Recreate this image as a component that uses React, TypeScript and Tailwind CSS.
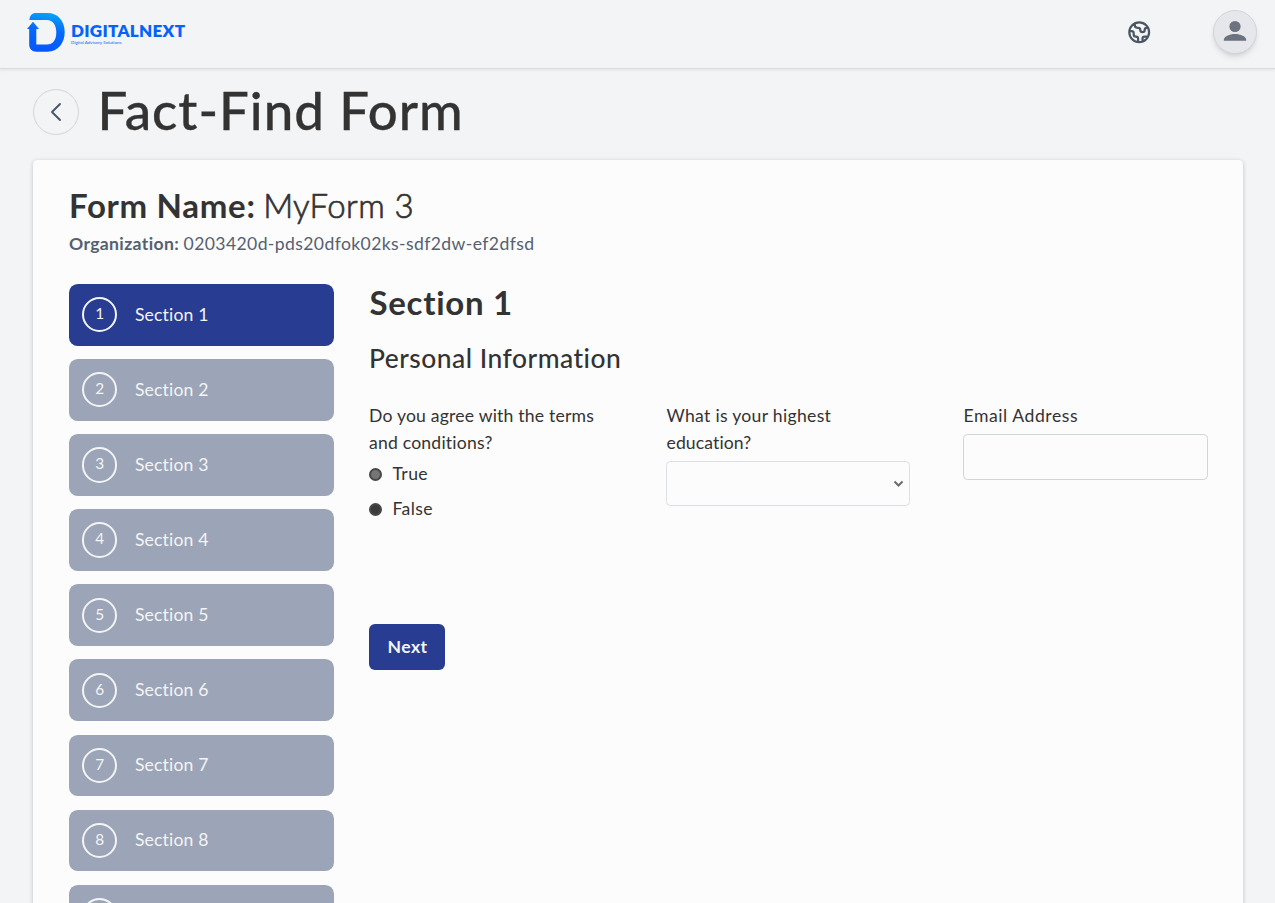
import { HiOutlineGlobe } from 'react-icons/hi';

const sections = [1, 2, 3, 4, 5, 6, 7, 8, 9];

function Logo() {
  return (
    <div className="flex items-center">
      <svg width="38" height="40" viewBox="0 0 38 40" className="mr-[6px] shrink-0">
        <defs>
          <linearGradient id="mark" x1="0.6" y1="0" x2="0.45" y2="1">
            <stop offset="0" stopColor="#08a4f6" />
            <stop offset="0.45" stopColor="#0568fb" />
            <stop offset="1" stopColor="#0558fc" />
          </linearGradient>
        </defs>
        <path
          fill="url(#mark)"
          d="M2.4 8C2.8 3.5 5 1 9 1h11.500C31 1 37.700 9 37.700 20S31 39.700 20.500 39.700H9.500C5 39.700 2.200 37 2.200 32.500V17H0L6 9.700 12 17H9.300V32.500H20c6 0 9.300-4.500 9.300-12S26 8 20 8Z"
        />
      </svg>
      <div className="flex flex-col pt-[3px] text-[#0563fb]">
        <span className="text-[17px] leading-[17px] font-extrabold tracking-[0.3px]">DIGITALNEXT</span>
        <span className="mt-[1px] text-[4.5px] leading-[6px]">Digital Advisory Solutions</span>
      </div>
    </div>
  );
}

function Header() {
  return (
    <header className="flex h-[69px] shrink-0 items-center justify-between border-b border-[#d9dbdf] pr-[18px] pl-[27px] shadow-[0_1px_3px_rgba(0,0,0,0.08)]">
      <div className="-mt-[4px]">
        <Logo />
      </div>
      <div className="-mt-[4px] flex items-center gap-[61px]">
        <HiOutlineGlobe className="size-[26.4px] text-[#4b5563]" />
        <button className="flex size-[44px] items-center justify-center rounded-full border border-[#d1d5db] bg-[#e5e7eb] shadow-[0_4px_6px_-1px_rgba(0,0,0,0.1),0_2px_4px_-2px_rgba(0,0,0,0.1)]">
          <svg width="24" height="22" viewBox="0 0 24 22" fill="#6b7280" className="-mt-[2px]">
            <circle cx="12" cy="6.500" r="5.600" />
            <path d="M.8 20.800v-.9C.8 16.600 6.500 14 12 14s11.200 2.600 11.200 5.900v.9Z" />
          </svg>
        </button>
      </div>
    </header>
  );
}

function SectionTab({ n, active }: { n: number; active: boolean }) {
  return (
    <button
      className={`flex h-[61.6px] w-full shrink-0 items-center rounded-[8.8px] pl-[13.2px] text-[#f3f4f6] ${active ? 'bg-[#283c91]' : 'bg-[#9ca4b7]'}`}
    >
      <span className="mr-[17.6px] flex size-[35.2px] items-center justify-center rounded-full border-2 border-[#f3f4f6] pb-[2px] text-[15.4px]">
        {n}
      </span>
      <span className="text-[17.6px] tracking-[0.15px]">Section {n}</span>
    </button>
  );
}

function Radio({ label, focused }: { label: string; focused?: boolean }) {
  return (
    <label className="flex h-[35.2px] items-center gap-[10.5px]">
      <span
        className={`size-[13px] rounded-full border-2 border-[#474747] ${focused ? 'bg-[#757575]' : 'bg-[#3b3b3b]'}`}
      />
      <span className="pt-[1px] tracking-[0.4px]">{label}</span>
    </label>
  );
}

export default function App() {
  return (
    <div className="flex h-screen flex-col overflow-hidden bg-[#f3f4f6] font-['Lato',sans-serif] text-[#333333] [font-variant-ligatures:none]">
      <Header />
      <div className="flex shrink-0 items-center gap-[18.500px] pt-[7px] pl-[33px]">
        <button className="mt-[5px] flex size-[46px] items-center justify-center rounded-full border border-[#d1d5db]">
          <svg width="12" height="20" viewBox="0 0 12 20" fill="none" stroke="#475569" strokeWidth="1.9" strokeLinecap="round" strokeLinejoin="round">
            <path d="M10 2 2 10l8 8" />
          </svg>
        </button>
        <h1 className="pt-[1px] text-[52.8px] leading-[65px] font-medium tracking-[1px] [-webkit-text-stroke:0.3px_#333]">Fact-Find Form</h1>
      </div>
      <main className="mr-[32px] ml-[33px] mt-[18px] h-[900px] shrink-0 rounded-t-[4.4px] bg-[#fcfcfc] px-[36px] pt-[25px] shadow-[0_1px_4px_rgba(0,0,0,0.22)]">
        <h2 className="text-[33px] leading-[40px]">
          <span className="font-bold tracking-[0.7px]">Form Name:</span>
          <span className="ml-[7.5px] font-light tracking-[0.4px] [-webkit-text-stroke:0.7px_#333]">MyForm 3</span>
        </h2>
        <p className="mt-[6px] text-[17.6px] leading-[26.4px] text-[#556070]">
          <span className="font-bold tracking-[0.34px]">Organization:</span>{' '}
          <span className="tracking-[0.38px]">0203420d-pds20dfok02ks-sdf2dw-ef2dfsd</span>
        </p>
        <div className="mt-[26.5px] flex gap-[35px]">
          <nav className="flex w-[265px] shrink-0 flex-col gap-[13.52px]">
            {sections.map((n) => (
              <SectionTab key={n} n={n} active={n === 1} />
            ))}
          </nav>
          <section className="w-[839px] shrink-0 text-[17.6px]">
            <h3 className="-mt-[1px] ml-[0.5px] text-[33px] leading-[39px] font-bold tracking-[0.7px]">Section 1</h3>
            <h4 className="mt-[18px] text-[26.4px] leading-[36px] font-medium tracking-[0.5px]">Personal Information</h4>
            <div className="mt-[27px] grid grid-cols-[244px_244px_245px] gap-[53px] leading-[26.8px]">
              <div>
                <p className="tracking-[0.2px]">
                  Do you agree with the terms
                  <br />
                  and conditions?
                </p>
                <Radio label="True" focused />
                <Radio label="False" />
              </div>
              <div>
                <p className="pl-[0.5px] tracking-[0.3px]">
                  What is your highest
                  <br />
                  <span className="tracking-[0.1px]">education?</span>
                </p>
                <div className="mt-[4.6px] flex h-[45px] items-center justify-end rounded-[4.4px] border border-[#dcdfe6] pr-[5px]">
                  <svg width="11" height="8" viewBox="0 0 11 8" fill="none" stroke="#6b6b6b" strokeWidth="2">
                    <path d="M1.500 1.500 5.500 5.500 9.500 1.500" />
                  </svg>
                </div>
              </div>
              <div>
                <p className="pl-[0.5px] tracking-[0.55px]">Email Address</p>
                <input className="mt-[4px] block h-[46px] w-[245px] rounded-[4.4px] border border-[#d1d5db] bg-transparent px-3 outline-none" />
              </div>
            </div>
            <button className="mt-[97.5px] flex h-[46px] w-[76px] items-center justify-center rounded-[6px] bg-[#283c91] pl-[1px] font-bold tracking-[0.4px] text-[#f3f4f6]">
              Next
            </button>
          </section>
        </div>
      </main>
    </div>
  );
}
